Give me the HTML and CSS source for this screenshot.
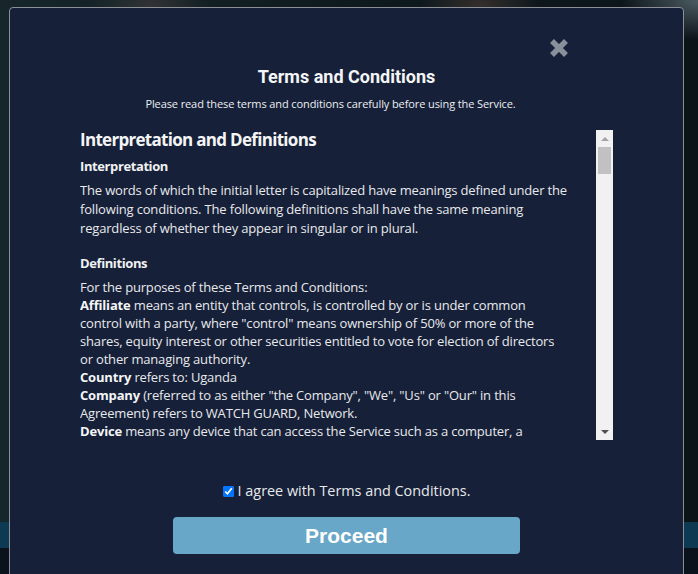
FILE: index.html
```html
<!DOCTYPE html>
<html lang="en">
<head>
<meta charset="utf-8">
<title>Terms and Conditions</title>
<link rel="stylesheet" href="styles.css">
</head>
<body>
<div class="backdrop">
  <div class="modal">
    <div class="close-row">
      <button class="close" aria-label="Close">
        <svg width="22" height="22" viewBox="0 0 22 22"><path d="M4 4 L18 18 M18 4 L4 18" stroke="#8a8f9c" stroke-width="5.5" stroke-linecap="butt" fill="none"/></svg>
      </button>
    </div>
    <h2 class="title">Terms and Conditions</h2>
    <p class="subtitle">Please read these terms and conditions carefully before using the Service.</p>
    <div class="terms-box">
      <div class="terms-text">
        <h3>Interpretation and Definitions</h3>
        <h4>Interpretation</h4>
        <p class="first">The words of which the initial letter is capitalized have meanings defined under the following conditions. The following definitions shall have the same meaning regardless of whether they appear in singular or in plural.</p>
        <h4 class="gap">Definitions</h4>
        <p>For the purposes of these Terms and Conditions:<br>
        <strong>Affiliate</strong> means an entity that controls, is controlled by or is under common control with a party, where "control" means ownership of 50% or more of the shares, equity interest or other securities entitled to vote for election of directors or other managing authority.<br>
        <strong>Country</strong> refers to: Uganda<br>
        <strong>Company</strong> (referred to as either "the Company", "We", "Us" or "Our" in this Agreement) refers to WATCH GUARD, Network.<br>
        <strong>Device</strong> means any device that can access the Service such as a computer, a cellphone or a digital tablet.<br>
        <strong>Service</strong> refers to the Website.<br>
        <strong>Terms and Conditions</strong> (also referred as "Terms") mean these Terms and Conditions that form the entire agreement between You and the Company regarding the use of the Service.</p>
      </div>
      <div class="scrollbar">
        <div class="arrow up"></div>
        <div class="track"><div class="thumb"></div></div>
        <div class="arrow down"></div>
      </div>
    </div>
    <label class="agree"><input type="checkbox" checked> I agree with Terms and Conditions.</label>
    <div class="actions">
      <button class="proceed">Proceed</button>
    </div>
  </div>
</div>
</body>
</html>
```
FILE: styles.css
```css
html, body {
  margin: 0;
  height: 100%;
  overflow: hidden;
}
body {
  background:
    radial-gradient(ellipse 60px 30px at 150px 5px, rgba(80,70,70,0.5), transparent),
    radial-gradient(ellipse 60px 30px at 480px 5px, rgba(90,70,60,0.5), transparent),
    radial-gradient(ellipse 80px 40px at 700px 0px, rgba(120,140,150,0.6), transparent),
    linear-gradient(180deg, transparent 0 522px, #0d3a52 522px 548px, #0c121c 548px),
    linear-gradient(90deg, #16262a, #0f1a1e 50%, #0c1418);
  font-family: "Open Sans", "Liberation Sans", sans-serif;
}
.backdrop {
  padding: 7px 14px 0 9px;
}
.modal {
  width: 673px;
  height: 620px;
  background: #162038;
  border: 1px solid #8c8f96;
  border-radius: 4px;
  color: #e8e9ec;
}
.close-row {
  display: flex;
  justify-content: flex-end;
  padding: 29px 113px 0 0;
  height: 22px;
}
.close {
  background: none;
  border: 0;
  padding: 0;
  width: 22px;
  height: 22px;
  cursor: pointer;
  display: block;
}
.close svg { display: block; }
.title {
  margin: 7px 0 0;
  text-align: center;
  font-family: Roboto, "Liberation Sans", sans-serif;
  font-weight: 700;
  font-size: 18px;
  line-height: 22px;
  color: #f4f5f7;
}
.subtitle {
  margin: 9px 0 0;
  padding-right: 32px;
  text-align: center;
  font-size: 11px;
  line-height: 14px;
  color: #eceef1;
  letter-spacing: -0.1px;
}
.terms-box {
  margin: 19px 70px 0 70px;
  height: 310px;
  display: flex;
}
.terms-text {
  flex: 1;
  overflow: hidden;
  font-size: 13px;
  line-height: 18px;
  letter-spacing: -0.17px;
  padding-right: 27px;
}
.terms-text h3 {
  margin: 1px 0 0;
  font-size: 17px;
  line-height: 18px;
  font-weight: 700;
  letter-spacing: -0.7px;
  color: #f4f5f7;
}
.terms-text h4 {
  margin: 7px 0 0;
  font-size: 13px;
  line-height: 20px;
  font-weight: 700;
  letter-spacing: -0.4px;
  color: #f0f1f3;
}
.terms-text h4.gap { margin-top: 15.5px; }
.terms-text p {
  margin: 5px 0 0;
}
.terms-text p.first {
  margin-top: 4.5px;
  line-height: 19px;
}
.terms-text strong { font-weight: 700; color: #f4f5f7; }
.scrollbar {
  width: 17px;
  background: #f1f1f1;
  display: flex;
  flex-direction: column;
}
.arrow {
  height: 17px;
  display: flex;
  align-items: center;
  justify-content: center;
}
.arrow::before {
  content: "";
  border-left: 4px solid transparent;
  border-right: 4px solid transparent;
}
.arrow.up::before { border-bottom: 4px solid #a3a3a3; }
.arrow.down::before { border-top: 4px solid #505050; }
.track {
  flex: 1;
  padding: 0 2px;
}
.thumb {
  height: 27px;
  background: #c1c1c1;
}
.agree {
  display: flex;
  justify-content: center;
  align-items: center;
  margin-top: 41px;
  font-size: 14.4px;
  line-height: 20px;
  color: #e8e9ec;
  gap: 2px;
}
.agree input {
  margin: 0 2px 0 0;
  width: 11px;
  height: 11px;
}
.actions {
  display: flex;
  justify-content: center;
  margin-top: 16px;
}
.proceed {
  width: 347px;
  height: 37px;
  border: 0;
  border-radius: 4px;
  background: #68a7c8;
  color: #ffffff;
  font-family: "Liberation Sans", Arial, sans-serif;
  font-weight: 700;
  font-size: 21px;
  cursor: pointer;
}
```
